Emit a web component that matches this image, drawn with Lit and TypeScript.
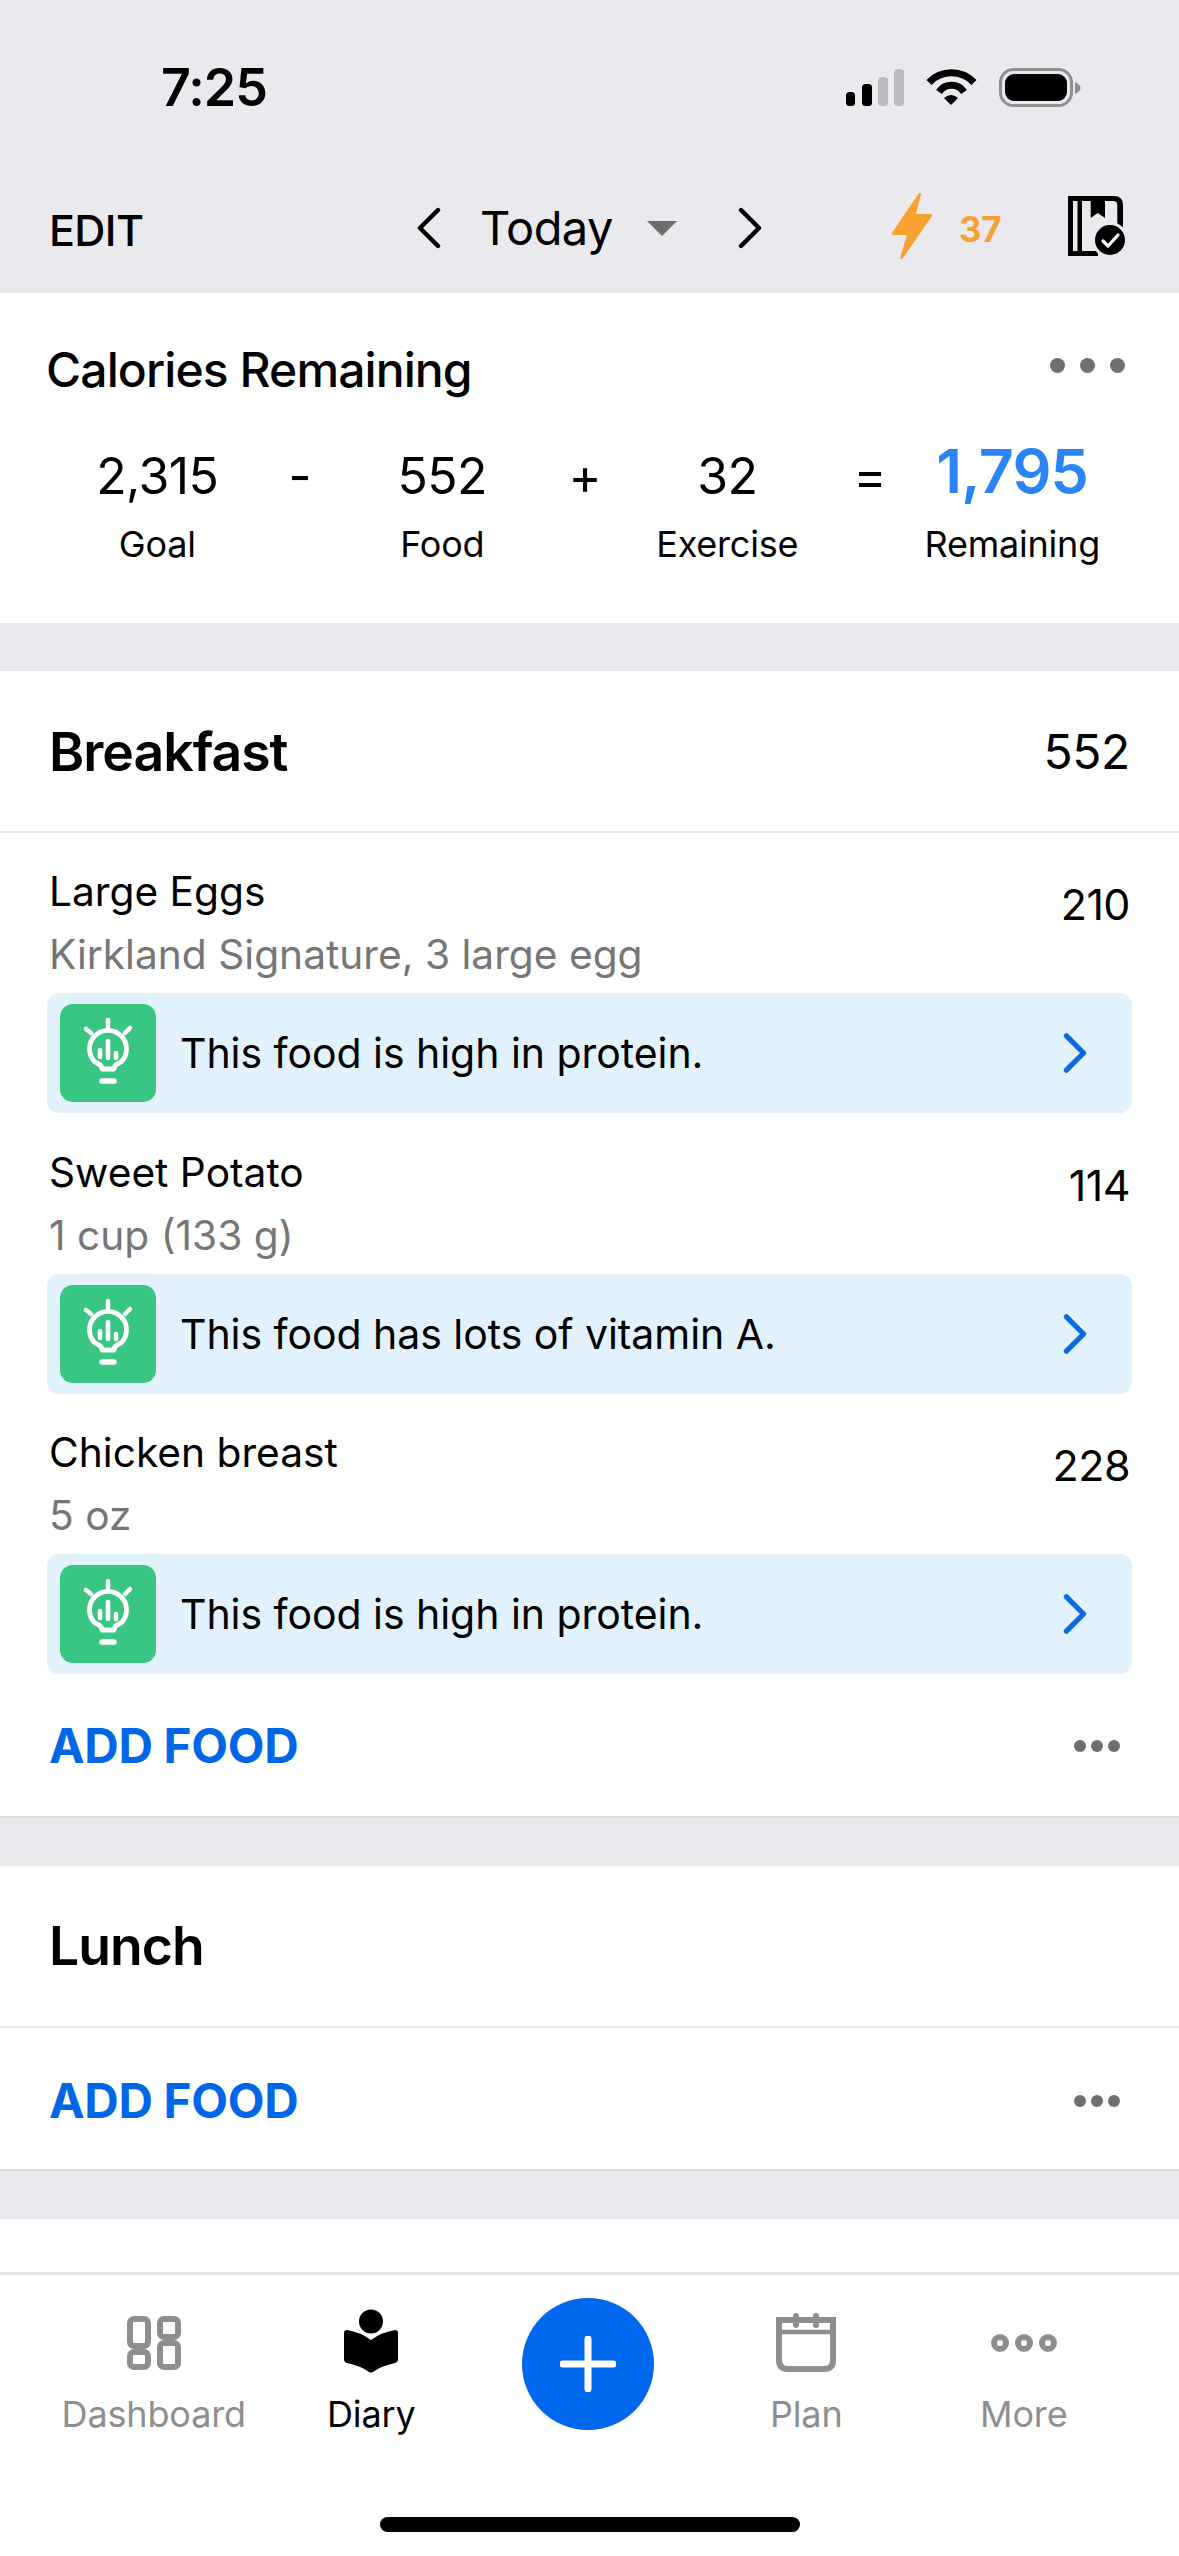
import { LitElement, html, css, svg } from "lit";
import { customElement } from "lit/decorators.js";

const bulb = html`<svg class="bulb" viewBox="0 0 96 96" fill="none" stroke="#fff" stroke-linecap="round" stroke-linejoin="round">
  <path stroke-width="4.8" d="M42 65 C42 60 38 60 35 58 A18.500 18.500 0 1 1 61 58 C58 60 54 60 54 65 Z"/>
  <path stroke-width="4.5" d="M48 16V23M26 25L31 29M70 24L65 29"/>
  <path stroke-width="4.6" d="M40 46V53M48 37V54M56 49V54"/>
  <path stroke-width="5.5" d="M42 77H54"/>
</svg>`;

const chev = (right: boolean, cls: string) => html`<svg class=${cls} viewBox="0 0 24 42" fill="none" stroke="currentColor" stroke-width="4.4" stroke-linecap="round" stroke-linejoin="round">
  ${right ? svg`<path d="M3 3L21 21L3 39"/>` : svg`<path d="M21 3L3 21L21 39"/>`}
</svg>`;

const foods = [
  { name: "Large Eggs", sub: "Kirkland Signature, 3 large egg", cal: "210", tip: "This food is high in protein." },
  { name: "Sweet Potato", sub: "1 cup (133 g)", cal: "114", tip: "This food has lots of vitamin A." },
  { name: "Chicken breast", sub: "5 oz", cal: "228", tip: "This food is high in protein." },
];

@customElement("app-root")
export class AppRoot extends LitElement {
  static styles = css`
    :host { display: flex; flex-direction: column; width: 1179px; height: 2556px; overflow: hidden; background: #eaeaee; color: #000; font-family: Inter, "Liberation Sans", sans-serif; letter-spacing: -0.2px; }
    .top { height: 293px; background: #eaeaee; display: flex; flex-direction: column; flex: none; }
    .status { height: 172px; display: flex; align-items: flex-start; position: relative; flex: none; }
    .time { margin: 58px 0 0 161px; font-size: 52px; line-height: 60px; font-weight: 600; letter-spacing: -1px; }
    .sicons { margin: 68px 98px 0 auto; width: 235px; height: 40px; flex: none; display: block; }
    .nav { height: 121px; display: flex; align-items: flex-start; flex: none; }
    .edit { margin: 33px 0 0 49px; font-size: 43px; line-height: 50px; font-weight: 500; letter-spacing: -0.6px; width: 100px; }
    .cl { width: 24px; height: 42px; margin: 35px 0 0 268px; flex: none; }
    .today { margin: 27px 0 0 39px; font-size: 47px; line-height: 58px; font-weight: 400; width: 167px; letter-spacing: -0.6px; }
    .tri { width: 0; height: 0; border-left: 15px solid transparent; border-right: 15px solid transparent; border-top: 15px solid #6c6c6c; margin: 49px 0 0 0; flex: none; }
    .cr { width: 24px; height: 42px; margin: 35px 0 0 61px; flex: none; }
    .bolt { width: 42px; height: 68px; margin: 20px 0 0 129px; flex: none; }
    .streak { margin: 35px 0 0 26px; font-size: 35px; line-height: 44px; font-weight: 700; color: #f7a134; width: 45px; letter-spacing: -0.4px; }
    .book { width: 58px; height: 64px; margin: 22px 0 0 64px; flex: none; }

    .main { flex: 1; min-height: 0; overflow: hidden; }
    .cal { background: #fff; height: 330px; padding: 0 0 0 46px; box-sizing: border-box; margin-bottom: 48px; }
    .calhead { display: flex; align-items: center; height: 154px; padding-right: 54px; }
    .calhead h2 { margin: 0; font-size: 48px; line-height: 60px; font-weight: 500; letter-spacing: -0.9px; }
    .calhead .dots { margin-left: auto; display: flex; gap: 15px; padding-bottom: 10px; }
    .calhead .dots i { width: 15px; height: 15px; border-radius: 50%; background: #707070; display: block; }
    .stats { display: grid; grid-template-columns: repeat(7, 142.5px); margin: -4px 0 0 40px; grid-template-rows: 66px 63px; justify-items: center; }
    .num { font-size: 50px; line-height: 66px; text-align: center; font-weight: 400; letter-spacing: -0.6px; white-space: nowrap; }
    .num.big { font-size: 61px; font-weight: 600; color: #2a84f5; line-height: 56px; letter-spacing: -0.8px; }
    .lab { font-size: 36px; line-height: 56px; text-align: center; white-space: nowrap; letter-spacing: -0.2px; padding-top: 7px; }
    .meal { background: #fff; margin-bottom: 48px; border-bottom: 2px solid #dcdcdc; }
    .mhead { height: 162px; display: flex; align-items: center; justify-content: space-between; padding: 0 49px; border-bottom: 2px solid #e6e6e6; box-sizing: border-box; }
    .mhead b { font-size: 53.5px; font-weight: 600; letter-spacing: -1px; }
    .mhead span { font-size: 48px; letter-spacing: -0.4px; }
    .food { height: 280.5px; padding: 0 47px; box-sizing: border-box; }
    .frow { display: grid; grid-template-columns: 1fr auto; padding: 0 2px 0 2px; height: 160px; }
    .fname { font-size: 40.7px; line-height: 50px; margin-top: 34px; letter-spacing: 0; }
    .fsub { font-size: 40.7px; line-height: 50px; margin-top: 13px; color: #767676; letter-spacing: 0; }
    .fcal { font-size: 43px; line-height: 50px; margin-top: 46px; letter-spacing: -0.5px; }
    .tip { height: 120px; background: #e2f2fd; border-radius: 12px; display: flex; align-items: center; padding: 0 40px 0 13px; }
    .gicon { width: 96px; height: 98px; background: #38c682; border-radius: 13px; flex: none; }
    .bulb { width: 96px; height: 96px; display: block; }
    .tip span { margin-left: 24px; font-size: 41px; letter-spacing: -0.05px; flex: 1; }
    .tchev { width: 24px; height: 40px; color: #0a6ae0; flex: none; margin-right: 5px; stroke-width: 5.5; }
    .add { display: flex; align-items: center; justify-content: space-between; padding: 0 59px 0 49px; }
    .first { height: 140px; margin-top: 1px; }
    .second { height: 141px; padding-top: 6px; box-sizing: border-box; }
    .add b { font-size: 47.7px; font-weight: 700; color: #0066e8; letter-spacing: -0.3px; }
    .add .dots { display: flex; gap: 5px; }
    .add .dots i { width: 12px; height: 12px; border-radius: 50%; background: #6e6e6e; display: block; }
    .rest { background: #fff; height: 60px; }

    .tabs { height: 284px; flex: none; background: #fff; border-top: 3px solid #e4e4e4; box-sizing: border-box; position: relative; display: grid; grid-template-columns: repeat(5, 217.5px); padding-left: 45px; }
    .tab { display: flex; flex-direction: column; align-items: center; color: #8e8e90; }
    .tab.on { color: #000; }
    .ic { height: 100px; margin-top: 18px; display: flex; align-items: center; justify-content: center; flex: none; }
    .diary { margin-top: -4px; }
    .tab span { font-size: 36px; line-height: 44px; margin-top: -1px; letter-spacing: -0.15px; }
    .fab { width: 132px; height: 132px; border-radius: 50%; background: #0068ee; margin: 23px 2px 0 0; display: flex; align-items: center; justify-content: center; }
    .home { position: absolute; left: 380px; top: 242px; width: 420px; height: 15px; border-radius: 8px; background: #000; }
  `;

  render() {
    return html`
      <div class="top">
        <div class="status">
          <div class="time">7:25</div>
          <svg class="sicons" viewBox="0 0 235 40" xmlns="http://www.w3.org/2000/svg">
            <rect x="0" y="24" width="9" height="14" rx="3.5" fill="#000"/>
            <rect x="16" y="16" width="10" height="22" rx="3.5" fill="#000"/>
            <rect x="32" y="9" width="10" height="29" rx="3.5" fill="#bcbcc0"/>
            <rect x="48" y="1" width="10" height="37" rx="3.5" fill="#bcbcc0"/>
            <g fill="none" stroke="#000" stroke-width="7">
              <path d="M83 14.500 A31 31 0 0 1 128 14.500"/>
              <path d="M93 24 A15 15 0 0 1 118 24"/>
            </g>
            <path d="M98 30 Q105 24 112 30 L105 37 Z" fill="#000" />
            <rect x="154.500" y="1.500" width="71" height="36" rx="13" fill="none" stroke="#8e8e93" stroke-width="3"/>
            <rect x="159" y="6" width="62" height="27" rx="9" fill="#000"/>
            <path d="M229 14 C233 16 234.500 18 234.500 20 C234.500 22 233 24 229 26 Z" fill="#8e8e93"/>
          </svg>
        </div>
        <div class="nav">
          <div class="edit">EDIT</div>
          ${chev(false, "cl")}
          <div class="today">Today</div>
          <div class="tri"></div>
          ${chev(true, "cr")}
          <svg class="bolt" viewBox="0 0 42 68"><path d="M28 1 L1 41 Q0 43 3 43 H16 L9 66 Q10 68 12 66 L41 24 Q42 22 39 22 H25 L30 2 Q29 0 28 1 Z" fill="#f9a12e"/></svg>
          <div class="streak">37</div>
          <svg class="book" viewBox="0 0 58 64">
            <path d="M0 2 H46 Q55 2 55 11 V45 H30 V62 H0 Z" fill="#000"/>
            <path d="M5 7 H9.500 V57 H5 Z" fill="#eaeaee"/>
            <path d="M14 7 H22.700 V24 L29.700 19 L37 24 V7 H45 Q49.300 7 49.300 11 V45 H30 V57 H14 Z" fill="#eaeaee"/>
            <circle cx="42" cy="46" r="18" fill="#eaeaee"/>
            <circle cx="42" cy="46" r="15" fill="#000"/>
            <path d="M35 47 L40 52 L50 41" fill="none" stroke="#fff" stroke-width="3.2" stroke-linecap="round" stroke-linejoin="round"/>
          </svg>
        </div>
      </div>

      <div class="main">
        <section class="cal">
          <div class="calhead"><h2>Calories Remaining</h2><div class="dots"><i></i><i></i><i></i></div></div>
          <div class="stats">
            <div class="num">2,315</div><div class="num">-</div><div class="num">552</div><div class="num">+</div><div class="num">32</div><div class="num">=</div><div class="num big">1,795</div>
            <div class="lab">Goal</div><div></div><div class="lab">Food</div><div></div><div class="lab">Exercise</div><div></div><div class="lab">Remaining</div>
          </div>
        </section>

        <section class="meal">
          <div class="mhead"><b>Breakfast</b><span>552</span></div>
          ${foods.map(f => html`
            <div class="food">
              <div class="frow">
                <div><div class="fname">${f.name}</div><div class="fsub">${f.sub}</div></div>
                <div class="fcal">${f.cal}</div>
              </div>
              <div class="tip"><div class="gicon">${bulb}</div><span>${f.tip}</span>${chev(true, "tchev")}</div>
            </div>`)}
          <div class="add first"><b>ADD FOOD</b><div class="dots"><i></i><i></i><i></i></div></div>
        </section>

        <section class="meal">
          <div class="mhead"><b>Lunch</b></div>
          <div class="add second"><b>ADD FOOD</b><div class="dots"><i></i><i></i><i></i></div></div>
        </section>
        <div class="rest"></div>
      </div>

      <nav class="tabs">
        <div class="tab"><div class="ic">
          <svg width="54" height="54" viewBox="0 0 54 54" fill="none" stroke="currentColor" stroke-width="6">
            <rect x="3" y="3" width="18" height="27" rx="4"/><rect x="33" y="3" width="18" height="18" rx="4"/>
            <rect x="3" y="36" width="18" height="15" rx="4"/><rect x="33" y="27" width="18" height="24" rx="4"/>
          </svg></div><span>Dashboard</span></div>
        <div class="tab on"><div class="ic">
          <svg class="diary" width="54" height="64" viewBox="0 0 54 64" fill="currentColor">
            <circle cx="27" cy="12.500" r="12"/>
            <path d="M3 21 Q0 21 0 24 V50 Q0 53 3 54 Q17 57 25 63 Q27 64 29 63 Q37 57 51 54 Q54 53 54 50 V24 Q54 21 51 21 Q38 23 27 31 Q16 23 3 21 Z"/>
          </svg></div><span>Diary</span></div>
        <div class="tab"><div class="fab">
          <svg width="56" height="56" viewBox="0 0 56 56" stroke="#fff" stroke-width="7" stroke-linecap="round"><path d="M28 3V53M3 28H53"/></svg>
        </div></div>
        <div class="tab"><div class="ic">
          <svg width="60" height="60" viewBox="0 0 60 60" fill="none" stroke="currentColor">
            <path stroke-width="6" d="M3 7 H57 V47 Q57 56 48 56 H12 Q3 56 3 47 Z"/>
            <path stroke-width="4.500" d="M3 19H57"/>
            <path stroke-width="6" stroke-linecap="round" d="M20 3V12M40 3V12"/>
          </svg></div><span>Plan</span></div>
        <div class="tab"><div class="ic">
          <svg width="66" height="18" viewBox="0 0 66 18" fill="none" stroke="currentColor" stroke-width="6">
            <circle cx="9" cy="9" r="6"/><circle cx="33" cy="9" r="6"/><circle cx="57" cy="9" r="6"/>
          </svg></div><span>More</span></div>
        <div class="home"></div>
      </nav>
    `;
  }
}
